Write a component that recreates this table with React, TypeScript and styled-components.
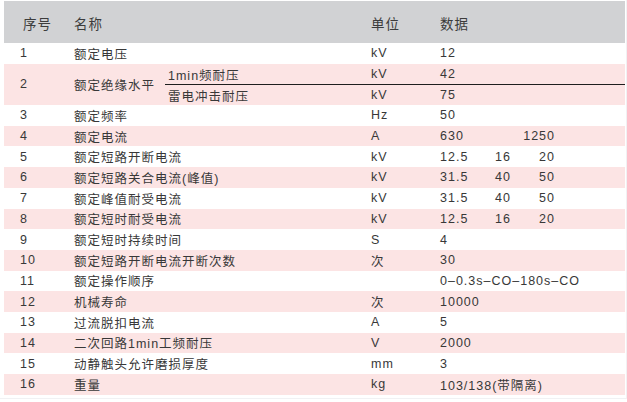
import React from "react";
import styled, { createGlobalStyle } from "styled-components";

const GlobalStyle = createGlobalStyle`
	html, body {
		margin: 0;
		padding: 0;
		background: #ffffff;
	}
	body {
		font-family: "Liberation Sans", "Noto Sans CJK SC", Arial, sans-serif;
		color: #383838;
	}
`;

type Spec = {
	no: string;
	name: string;
	unit: string;
	values: string[];
};

const specs: Spec[] = [
	{ no: "1", name: "额定电压", unit: "kV", values: ["12"] },
	{ no: "3", name: "额定频率", unit: "Hz", values: ["50"] },
	{ no: "4", name: "额定电流", unit: "A", values: ["630", "", "1250"] },
	{ no: "5", name: "额定短路开断电流", unit: "kV", values: ["12.5", "16", "20"] },
	{ no: "6", name: "额定短路关合电流(峰值)", unit: "kV", values: ["31.5", "40", "50"] },
	{ no: "7", name: "额定峰值耐受电流", unit: "kV", values: ["31.5", "40", "50"] },
	{ no: "8", name: "额定短时耐受电流", unit: "kV", values: ["12.5", "16", "20"] },
	{ no: "9", name: "额定短时持续时间", unit: "S", values: ["4"] },
	{ no: "10", name: "额定短路开断电流开断次数", unit: "次", values: ["30"] },
	{ no: "11", name: "额定操作顺序", unit: "", values: ["0–0.3s–CO–180s–CO"] },
	{ no: "12", name: "机械寿命", unit: "次", values: ["10000"] },
	{ no: "13", name: "过流脱扣电流", unit: "A", values: ["5"] },
	{ no: "14", name: "二次回路1min工频耐压", unit: "V", values: ["2000"] },
	{ no: "15", name: "动静触头允许磨损厚度", unit: "mm", values: ["3"] },
	{ no: "16", name: "重量", unit: "kg", values: ["103/138(带隔离)"] },
];

const ROW_H = 20.7;
const COLUMNS = "70px 91px 206px 69px 1fr";

function Values({ values }: { values: string[] }) {
	if (values.length === 1) return <Cell>{values[0]}</Cell>;
	return (
		<ValueGrid>
			{values.map((v, i) => (
				<Value key={i} $end={i === 2}>
					{v}
				</Value>
			))}
		</ValueGrid>
	);
}

export default function App() {
	return (
		<>
			<GlobalStyle />
			<Frame>
				<Table>
					<Head>
						<HeadCell $pad={19}>序号</HeadCell>
						<HeadCell $span>名称</HeadCell>
						<HeadCell>单位</HeadCell>
						<HeadCell>数据</HeadCell>
					</Head>

					<Row>
						<NoCell>1</NoCell>
						<NameCell>额定电压</NameCell>
						<Cell>kV</Cell>
						<Values values={["12"]} />
					</Row>

					<DoubleRow $pink>
						<NoCell $tall>2</NoCell>
						<Cell $tall>额定绝缘水平</Cell>
						<SubCell>1min频耐压</SubCell>
						<Cell>kV</Cell>
						<Cell>42</Cell>
						<SubCell $rule>雷电冲击耐压</SubCell>
						<Cell $rule>kV</Cell>
						<Cell $rule>75</Cell>
					</DoubleRow>

					{specs.slice(1).map((s, i) => (
						<Row key={s.no} $pink={i % 2 === 1}>
							<NoCell>{s.no}</NoCell>
							<NameCell>{s.name}</NameCell>
							<Cell>{s.unit}</Cell>
							<Values values={s.values} />
						</Row>
					))}
				</Table>
			</Frame>
		</>
	);
}

const Frame = styled.div`
	box-sizing: border-box;
	width: 627px;
	height: 399px;
	padding: 1px 2px 0 4px;
	border-right: 1px solid #f1f1f3;
	border-bottom: 1px solid #f1f1f3;
`;

const Table = styled.div`
	display: flex;
	flex-direction: column;
	width: 621px;
	font-size: 12.5px;
	letter-spacing: 1px;
`;

const Head = styled.div`
	display: grid;
	grid-template-columns: ${COLUMNS};
	align-items: center;
	height: 42px;
	padding-top: 2px;
	box-sizing: border-box;
	background: #d1d2d4;
	font-size: 13.5px;
	color: #3c3c3c;
`;

const HeadCell = styled.div<{ $pad?: number; $span?: boolean }>`
	padding-left: ${(p) => p.$pad ?? 0}px;
	grid-column: ${(p) => (p.$span ? "span 2" : "auto")};
`;

const Row = styled.div<{ $pink?: boolean }>`
	display: grid;
	grid-template-columns: ${COLUMNS};
	align-items: center;
	height: ${ROW_H}px;
	background: ${(p) => (p.$pink ? "#fce4e4" : "#ffffff")};
`;

const DoubleRow = styled(Row)`
	grid-template-rows: 1fr 1fr;
	align-items: stretch;
	height: ${ROW_H * 2}px;
`;

const Cell = styled.div<{ $tall?: boolean; $rule?: boolean }>`
	display: flex;
	align-items: center;
	white-space: nowrap;
	grid-row: ${(p) => (p.$tall ? "span 2" : "auto")};
	border-top: ${(p) => (p.$rule ? "1px solid #1e1e1e" : "none")};
`;

const NoCell = styled(Cell)`
	padding-left: 16px;
`;

const NameCell = styled(Cell)`
	grid-column: span 2;
`;

const SubCell = styled(Cell)`
	padding-left: 3px;
`;

const ValueGrid = styled.div`
	display: grid;
	grid-template-columns: 55px 30px 30px;
	align-items: center;
`;

const Value = styled.span<{ $end?: boolean }>`
	justify-self: ${(p) => (p.$end ? "end" : "start")};
	white-space: nowrap;
`;
